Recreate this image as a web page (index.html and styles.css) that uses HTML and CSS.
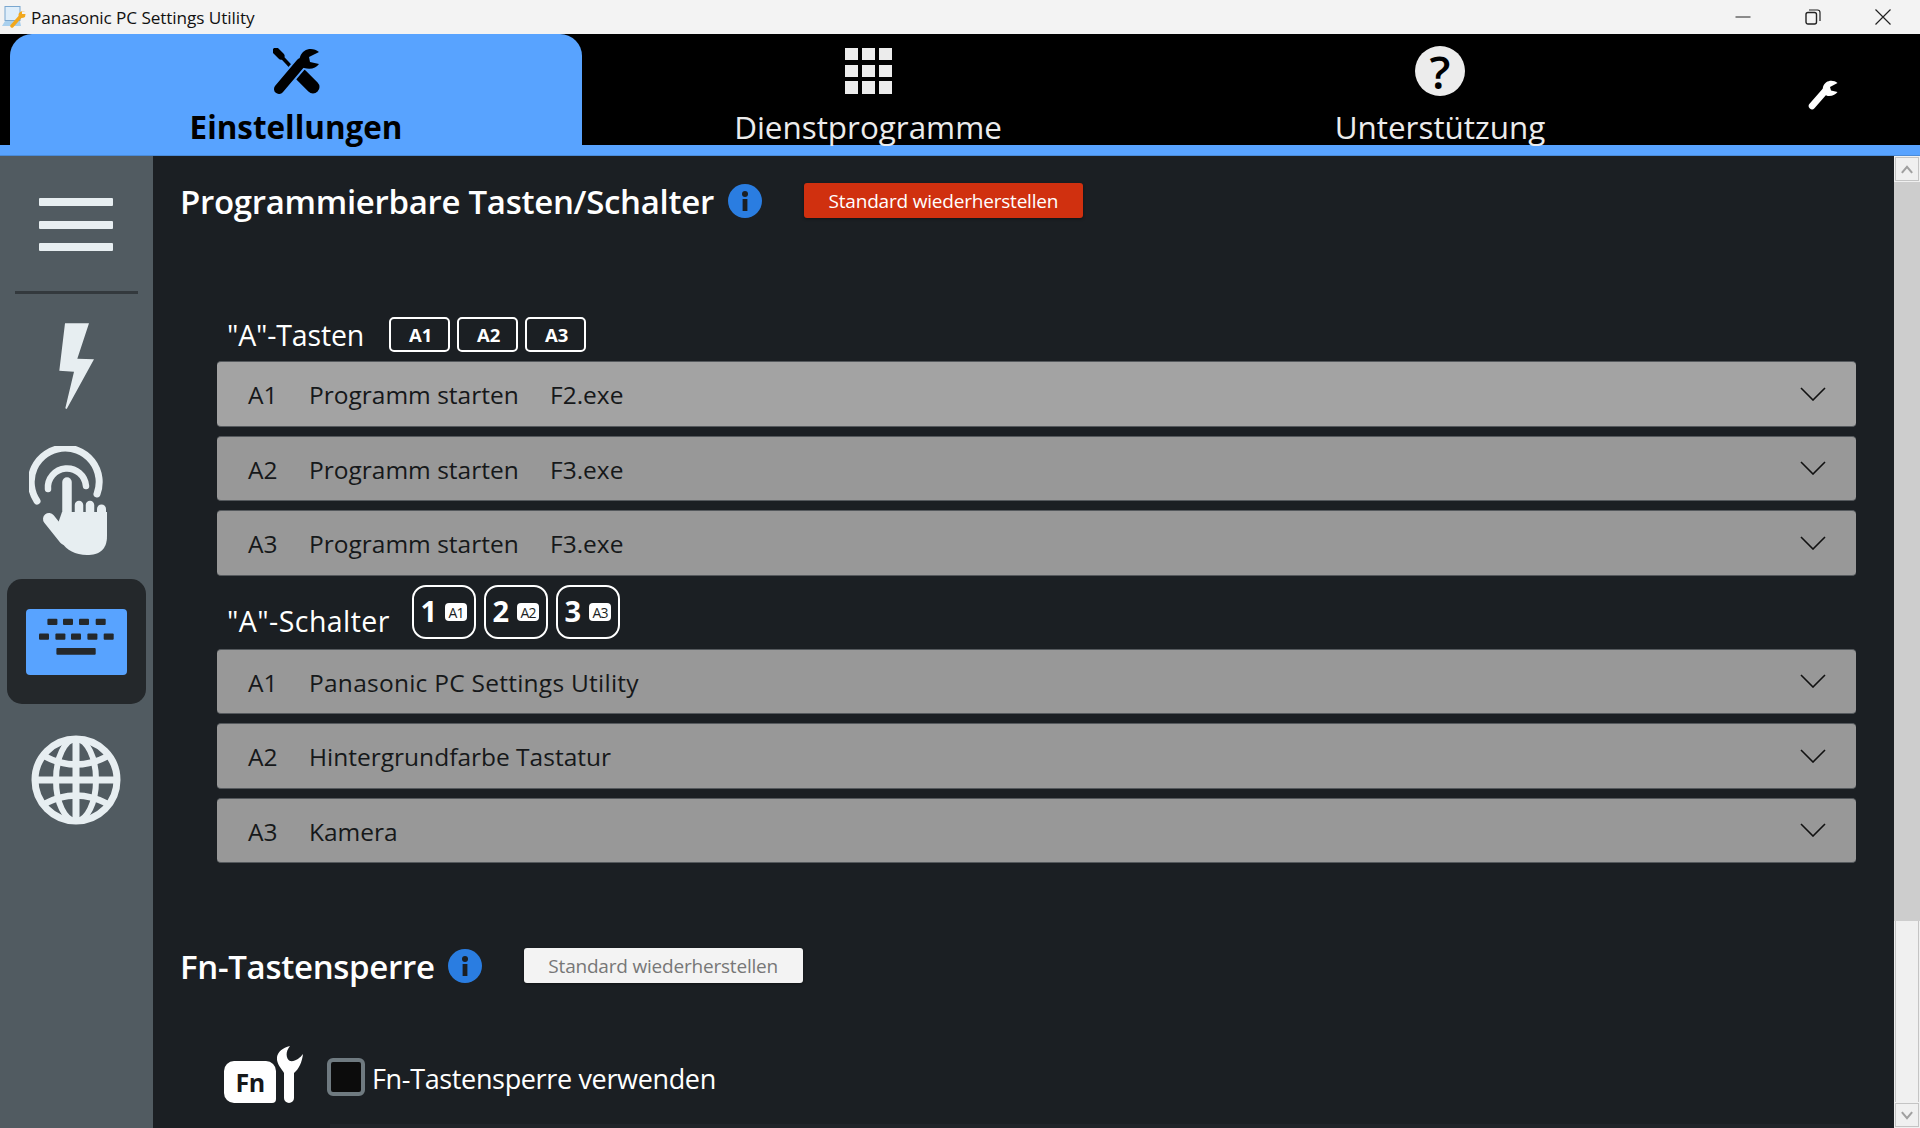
FILE: index.html
```html
<!DOCTYPE html>
<html>
<head>
    <meta charset="UTF-8">
    <meta name="viewport" content="width=device-width, initial-scale=1.0">
    <title>Panasonic PC Settings Utility</title>
    <link rel="stylesheet" href="styles.css">
</head>
<body>
    <div class="titlebar">
        <svg class="app-icon" viewBox="0 0 24 22">
            <rect x="3" y="0.5" width="15" height="14" fill="#dfeefa" stroke="#7aa7cf"/>
            <path d="M0 20 L3 15 H18 L19 20 Z" fill="#a9d0ee"/>
            <path d="M10 20 L18 11" stroke="#f2a81d" stroke-width="3.4" stroke-linecap="round"/>
            <path d="M23.5 8 H20 V5.5 L23.5 5 C20 4.5 16.5 6 16.5 9 C16.5 12 20 13 23 11 Z" fill="#f2a81d"/>
        </svg>
        <span class="app-name">Panasonic PC Settings Utility</span>
        <div class="window-buttons">
            <svg viewBox="0 0 16 16"><path d="M0.5 8 H15.5" stroke="#222" fill="none"/></svg>
            <svg viewBox="0 0 16 16"><rect x="1" y="3.5" width="10.5" height="11.5" rx="2" stroke="#222" stroke-width="1.4" fill="none"/><path d="M4 1 H12.5 Q15 1 15 3.5 V12" stroke="#222" stroke-width="1.2" fill="none"/></svg>
            <svg viewBox="0 0 16 16"><path d="M0.5 0.5 L15.5 15.5 M15.5 0.5 L0.5 15.5" stroke="#222" stroke-width="1.2" fill="none"/></svg>
        </div>
    </div>

    <nav class="topnav">
        <div class="tab active">
            <svg class="tab-icon" width="47" height="46" viewBox="0 0 47 46">
                <path d="M3 3 L8 8" stroke="#000" stroke-width="7" stroke-linecap="round"/>
                <path d="M6 6 L20 21" stroke="#000" stroke-width="3.6"/>
                <path d="M28 27 L40 39" stroke="#000" stroke-width="13" stroke-linecap="round"/>
                <path d="M6 41 L28 15" stroke="#58a3ff" stroke-width="14" stroke-linecap="round"/>
                <path d="M6 41 L28 15" stroke="#000" stroke-width="10" stroke-linecap="round"/>
                <path d="M46 4 C40 -1 30 0 27 9 C25 14 27 20 31 20 C38 22 43 20 46 16 L37 14 L36 9 Z" fill="#000"/>
            </svg>
            <span>Einstellungen</span>
        </div>
        <div class="tab">
            <div class="tab-icon grid-icon">
                <i></i><i></i><i></i><i></i><i></i><i></i><i></i><i></i><i></i>
            </div>
            <span>Dienstprogramme</span>
        </div>
        <div class="tab">
            <div class="tab-icon help-icon">?</div>
            <span>Unterstützung</span>
        </div>
        <svg class="nav-wrench" width="30" height="30" viewBox="0 0 30 30">
            <path d="M4 26 L18 10" stroke="#fff" stroke-width="6.5" stroke-linecap="round"/>
            <path d="M29.5 3 C25 -1 17 0 15 7 C14 12 17 16 21 16 C25 16 28 14 29.5 12 L23 10.5 L22 7 Z" fill="#fff"/>
        </svg>
    </nav>
    <div class="nav-line"></div>

    <div class="main">
        <aside class="sidebar">
            <div class="menu-icon"><i></i><i></i><i></i></div>
            <div class="side-divider"></div>
            <svg class="side-bolt" width="36" height="87" viewBox="0 0 36 87">
                <polygon points="6,0.3 30,0.3 18.3,35.7 35,36.3 7.7,86 6.3,85.3 15,48.7 0.3,47.7" fill="#e7eef1"/>
            </svg>
            <svg class="side-hand" width="78" height="109" viewBox="0 0 78 109">
                <g fill="none" stroke="#e7eef1" stroke-linecap="round">
                    <path d="M8 55 A34 34 0 1 1 68 48" stroke-width="7"/>
                    <path d="M19 43 A19 19 0 1 1 57 40" stroke-width="6.5"/>
                    <path d="M38 36 V75" stroke-width="9.5"/>
                    <path d="M50 59 V72 M61 59 V72" stroke-width="8.5"/>
                    <path d="M72.5 63 V76" stroke-width="9"/>
                    <path d="M20 73 L36 93" stroke-width="12"/>
                </g>
                <path d="M33 66 H78 V90 C78 104 70 109 58 109 C46 109 38 104 32 96 L26 86 Z" fill="#e7eef1"/>
            </svg>
            <div class="side-active">
                <svg width="101" height="66" viewBox="0 0 101 66">
                    <rect width="101" height="66" rx="4" fill="#58a3ff"/>
                    <g fill="#24282b">
                        <rect x="21.4" y="9.7" width="10" height="6.3" rx="1"/>
                        <rect x="37" y="9.7" width="10" height="6.3" rx="1"/>
                        <rect x="53" y="9.7" width="10" height="6.3" rx="1"/>
                        <rect x="69.7" y="9.7" width="10" height="6.3" rx="1"/>
                        <rect x="13" y="24.4" width="10" height="6.3" rx="1"/>
                        <rect x="29.4" y="24.4" width="10" height="6.3" rx="1"/>
                        <rect x="45" y="24.4" width="10" height="6.3" rx="1"/>
                        <rect x="61.4" y="24.4" width="10" height="6.3" rx="1"/>
                        <rect x="77.7" y="24.4" width="10" height="6.3" rx="1"/>
                        <rect x="30.4" y="39" width="39.3" height="6.7" rx="1"/>
                    </g>
                </svg>
            </div>
            <svg class="side-globe" width="90" height="90" viewBox="0 0 90 90">
                <g fill="none" stroke="#e7eef1" stroke-width="7">
                    <circle cx="45" cy="45" r="41"/>
                    <ellipse cx="45" cy="45" rx="20" ry="41" stroke-width="6"/>
                    <path d="M45 4 V86 M4 45 H86"/>
                    <path d="M13 21 Q45 38 77 21 M13 69 Q45 52 77 69" stroke-width="6.5"/>
                </g>
            </svg>
        </aside>

        <section class="content">
            <div class="section-head">
                <h2>Programmierbare Tasten/Schalter</h2>
                <svg class="info-icon" viewBox="0 0 34 34">
                    <circle cx="17" cy="17" r="17" fill="#2a7de1"/>
                    <circle cx="17" cy="10" r="3" fill="#1b1f23"/>
                    <rect x="14.6" y="15" width="4.8" height="12" fill="#1b1f23"/>
                </svg>
                <button class="reset-btn red">Standard wiederherstellen</button>
            </div>

            <div class="group first-group">
                <div class="group-label">
                    <span class="label-text">"A"-Tasten</span>
                    <span class="key-badge">A1</span>
                    <span class="key-badge">A2</span>
                    <span class="key-badge">A3</span>
                </div>
                <div class="row light-row"><span class="row-key">A1</span><span class="row-action">Programm starten</span><span>F2.exe</span><svg class="chevron" viewBox="0 0 26 14"><path d="M1 1 L13 13 L25 1"/></svg></div>
                <div class="row"><span class="row-key">A2</span><span class="row-action">Programm starten</span><span>F3.exe</span><svg class="chevron" viewBox="0 0 26 14"><path d="M1 1 L13 13 L25 1"/></svg></div>
                <div class="row"><span class="row-key">A3</span><span class="row-action">Programm starten</span><span>F3.exe</span><svg class="chevron" viewBox="0 0 26 14"><path d="M1 1 L13 13 L25 1"/></svg></div>

                <div class="group-label switch-label">
                    <span class="label-text">"A"-Schalter</span>
                    <span class="switch-badges">
                        <span class="switch-badge">1<b>A1</b></span>
                        <span class="switch-badge">2<b>A2</b></span>
                        <span class="switch-badge">3<b>A3</b></span>
                    </span>
                </div>
                <div class="row"><span class="row-key">A1</span><span class="wide-text">Panasonic PC Settings Utility</span><svg class="chevron" viewBox="0 0 26 14"><path d="M1 1 L13 13 L25 1"/></svg></div>
                <div class="row"><span class="row-key">A2</span><span>Hintergrundfarbe Tastatur</span><svg class="chevron" viewBox="0 0 26 14"><path d="M1 1 L13 13 L25 1"/></svg></div>
                <div class="row"><span class="row-key">A3</span><span>Kamera</span><svg class="chevron" viewBox="0 0 26 14"><path d="M1 1 L13 13 L25 1"/></svg></div>
            </div>

            <div class="section-head fn-head">
                <h2>Fn-Tastensperre</h2>
                <svg class="info-icon" viewBox="0 0 34 34">
                    <circle cx="17" cy="17" r="17" fill="#2a7de1"/>
                    <circle cx="17" cy="10" r="3" fill="#1b1f23"/>
                    <rect x="14.6" y="15" width="4.8" height="12" fill="#1b1f23"/>
                </svg>
                <button class="reset-btn light">Standard wiederherstellen</button>
            </div>

            <div class="fn-lock">
                <div class="fn-icon">
                    <span class="fn-box">Fn</span>
                    <svg width="26" height="58" viewBox="53 0 26 58">
                        <path d="M66 1 C57 3 52 9 53 15 C54 21 58 24 60 28 L60 53 A5 5 0 0 0 70 53 L70 28 C75 24 78 17 79 9 C76 13 71 17 66 16 C62 14 61 7 66 1 Z" fill="#fff"/>
                    </svg>
                </div>
                <span class="checkbox"></span>
                <span class="fn-text">Fn-Tastensperre verwenden</span>
            </div>
            <div class="next-row"></div>
        </section>

        <div class="scrollbar">
            <div class="scroll-btn"><svg viewBox="0 0 14 10"><path d="M1 9 L7 2 L13 9"/></svg></div>
            <div class="scroll-thumb"></div>
            <div class="scroll-track"></div>
            <div class="scroll-btn"><svg viewBox="0 0 14 10"><path d="M1 1 L7 8 L13 1"/></svg></div>
        </div>
    </div>
</body>
</html>
```

FILE: styles.css
```css
html, body {
    margin: 0;
    padding: 0;
    height: 100%;
}
body {
    width: 1920px;
    height: 1128px;
    overflow: hidden;
    display: flex;
    flex-direction: column;
    background-color: #1b1f23;
    font-family: "Open Sans", "Noto Sans", sans-serif;
}

/* title bar */
.titlebar {
    height: 34px;
    flex: none;
    display: flex;
    align-items: center;
    background-color: #f3f3f3;
    color: #111;
}
.app-icon {
    width: 24px;
    height: 22px;
    margin-left: 2px;
}
.app-name {
    margin-left: 5px;
    font-size: 17.2px;
    letter-spacing: -0.1px;
}
.window-buttons {
    margin-left: auto;
    display: flex;
    gap: 54px;
    padding-right: 29px;
}
.window-buttons svg {
    width: 16px;
    height: 16px;
}

/* top tabs */
.topnav {
    height: 111px;
    flex: none;
    display: flex;
    background-color: #000;
    padding-left: 10px;
    position: relative;
}
.tab {
    width: 572px;
    flex: none;
    display: flex;
    flex-direction: column;
    align-items: center;
    color: #ececec;
    font-size: 31.4px;
    line-height: 42px;
    padding-top: 14px;
    box-sizing: border-box;
}
.tab span {
    flex: none;
}
.tab.active {
    background-color: #58a3ff;
    color: #000;
    font-weight: 700;
    border-radius: 22px 22px 0 0;
}
.tab-icon {
    flex: none;
    height: 46px;
    margin-bottom: 12px;
}
.grid-icon {
    width: 47px;
    display: grid;
    grid-template-columns: repeat(3, 13px);
    grid-template-rows: repeat(3, 12.4px);
    gap: 4.3px 4px;
}
.grid-icon i {
    background-color: #ececec;
}
.help-icon {
    width: 50px;
    height: 50px;
    margin-top: -2px;
    margin-bottom: 10px;
    border-radius: 50%;
    background-color: #ececec;
    color: #000;
    font-size: 46px;
    line-height: 50px;
    font-weight: 600;
    text-align: center;
}
.nav-wrench {
    position: absolute;
    left: 1808px;
    top: 46px;
}
.nav-line {
    height: 11px;
    flex: none;
    background-color: #58a3ff;
    border-bottom: 1px solid #4a8bd8;
    box-sizing: border-box;
}

/* main area */
.main {
    flex: 1;
    display: flex;
    min-height: 0;
}
.sidebar {
    width: 153px;
    flex: none;
    display: flex;
    flex-direction: column;
    align-items: center;
    background-color: #515b61;
}
.menu-icon {
    width: 74px;
    margin-top: 42px;
    margin-right: 1px;
    display: flex;
    flex-direction: column;
    gap: 14.5px;
}
.menu-icon i {
    height: 8px;
    border-radius: 1px;
    background-color: #e7eef1;
}
.side-divider {
    width: 123px;
    height: 3px;
    margin-top: 40px;
    background-color: #33393d;
}
.side-bolt {
    margin-top: 29px;
}
.side-hand {
    margin-top: 36px;
    margin-right: 17px;
}
.side-active {
    width: 139px;
    height: 125px;
    margin-top: 24px;
    display: flex;
    align-items: center;
    justify-content: center;
    border-radius: 15px;
    background-color: #24282b;
}
.side-globe {
    margin-top: 31px;
    margin-right: 2px;
}

.content {
    flex: 1;
    min-width: 0;
    overflow: hidden;
    padding: 27px 38px 0 27px;
}
.section-head {
    display: flex;
    align-items: center;
    height: 35px;
}
h2 {
    margin: 0;
    padding-top: 2px;
    font-size: 33px;
    font-weight: 600;
    color: #fff;
    letter-spacing: -0.3px;
    white-space: nowrap;
}
.info-icon {
    width: 34px;
    height: 34px;
    margin-left: 14px;
    flex: none;
}
.reset-btn {
    height: 35px;
    width: 279px;
    margin-left: 42px;
    padding: 0;
    border: none;
    border-radius: 3px;
    font-family: inherit;
    font-size: 19px;
    letter-spacing: -0.2px;
    box-shadow: 0 1px 3px rgba(0, 0, 0, 0.4);
}
.reset-btn.red {
    background-color: #d0300f;
    color: #fff;
}
.reset-btn.light {
    background-color: #f3f3f3;
    color: #777;
}

.first-group {
    margin-top: 99px;
    margin-left: 37px;
}
.group-label {
    display: flex;
    align-items: center;
    height: 35px;
    margin-bottom: 9px;
    padding-left: 10px;
}
.label-text {
    font-size: 28.5px;
    color: #fff;
    margin-right: 25px;
    letter-spacing: -0.15px;
}
.key-badge {
    width: 61px;
    height: 35px;
    margin-right: 7px;
    box-sizing: border-box;
    display: flex;
    align-items: center;
    justify-content: center;
    border: 2px solid #fff;
    border-radius: 5px;
    padding-left: 2px;
    font-size: 18.5px;
    font-weight: 700;
    color: #fff;
}
.switch-label {
    height: 54px;
    margin-top: 9.5px;
    margin-bottom: 9.5px;
}
.switch-label .label-text {
    padding-top: 17px;
    margin-right: 22px;
    letter-spacing: 0.45px;
}
.switch-badges {
    display: flex;
    gap: 8px;
}
.switch-badge {
    width: 64px;
    height: 54px;
    box-sizing: border-box;
    display: flex;
    align-items: center;
    justify-content: center;
    gap: 8px;
    padding-bottom: 4px;
    border: 2px solid #fff;
    border-radius: 14px;
    font-size: 29px;
    font-weight: 700;
    color: #fff;
}
.switch-badge b {
    width: 22px;
    height: 18px;
    margin-top: 4px;
    display: flex;
    align-items: center;
    justify-content: center;
    border-radius: 4px;
    background-color: #fff;
    color: #1b1f23;
    font-size: 14px;
    font-weight: 400;
    letter-spacing: -0.8px;
}
.row {
    height: 65.5px;
    margin-bottom: 9px;
    padding: 2px 30px 0 31px;
    box-sizing: border-box;
    display: flex;
    align-items: center;
    border-radius: 4px;
    border-bottom: 1px solid #55595d;
    border-top: 1px solid #55595d;
    font-size: 24.5px;
    color: #16181a;
    background-color: #989898;
}
.row.light-row {
    background-color: #a3a3a3;
}
.row-key {
    width: 61px;
    flex: none;
}
.row-action {
    width: 241px;
    flex: none;
}
.wide-text {
    letter-spacing: 0.25px;
}
.chevron {
    width: 26px;
    height: 14px;
    margin-left: auto;
    margin-top: -2px;
    fill: none;
    stroke: #111;
    stroke-width: 1.6;
}

.fn-head {
    margin-top: 85px;
}
.fn-head .info-icon {
    margin-left: 13px;
}
.fn-lock {
    display: flex;
    align-items: center;
    margin-top: 62px;
    margin-left: 44px;
}
.fn-icon {
    display: flex;
    align-items: flex-end;
    gap: 1px;
    height: 58px;
    width: 79px;
}
.fn-box {
    width: 52px;
    height: 42px;
    display: flex;
    align-items: center;
    justify-content: center;
    border-radius: 10px 10px 4px 10px;
    background-color: #fff;
    color: #16181a;
    font-size: 25px;
    font-weight: 700;
    letter-spacing: -0.5px;
}
.checkbox {
    width: 38px;
    height: 38px;
    margin-left: 24px;
    margin-top: 5px;
    box-sizing: border-box;
    border: 4px solid #6f7a80;
    border-radius: 6px;
    background-color: #0c0c0c;
}
.fn-text {
    margin-left: 7px;
    margin-top: 9px;
    font-size: 27px;
    color: #fff;
    letter-spacing: -0.35px;
}
.next-row {
    height: 20px;
    margin-top: 21px;
    margin-left: 150px;
    margin-right: 6px;
    background-color: #202429;
}

/* scrollbar */
.scrollbar {
    width: 26px;
    flex: none;
    display: flex;
    flex-direction: column;
    background-color: #f0f0f0;
}
.scroll-btn {
    height: 24px;
    margin: 1px;
    box-sizing: border-box;
    display: flex;
    align-items: center;
    justify-content: center;
    border: 1px solid #c4c4c4;
    background-color: #f0f0f0;
}
.scroll-btn svg {
    width: 12px;
    height: 9px;
    fill: none;
    stroke: #a0a0a0;
    stroke-width: 2.4;
}
.scroll-thumb {
    height: 739px;
    background-color: #cdcdcd;
}
.scroll-track {
    flex: 1;
    border-left: 1px solid #c4c4c4;
    border-right: 1px solid #c4c4c4;
    margin: 0 1px;
}
```
